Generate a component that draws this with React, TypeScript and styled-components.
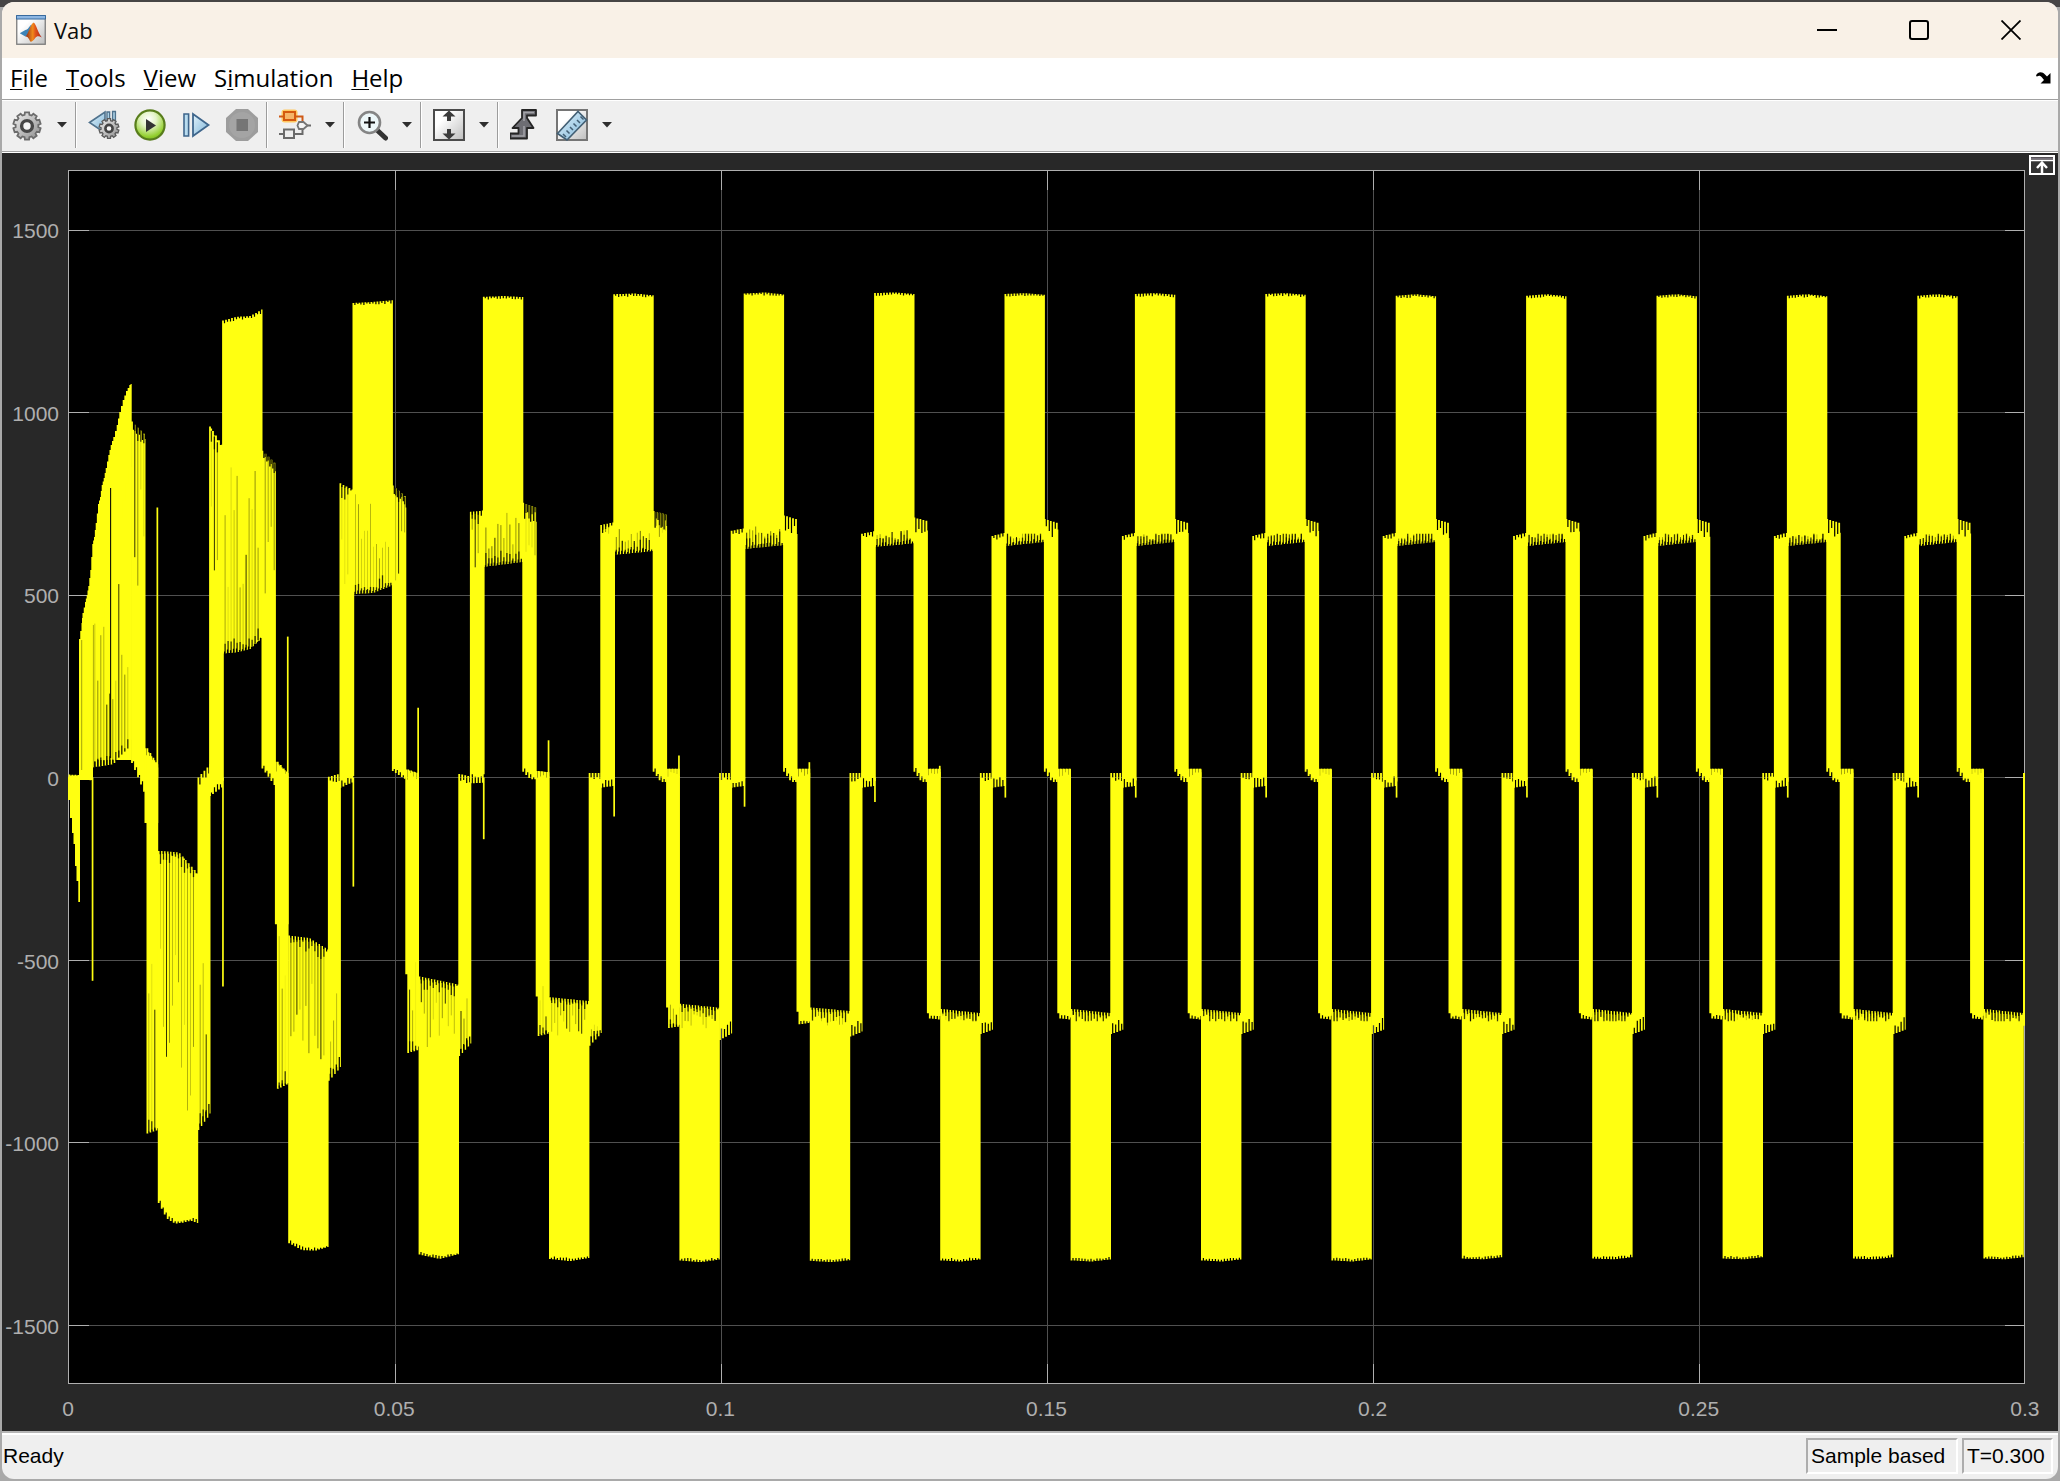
import React from "react";
import styled, { createGlobalStyle } from "styled-components";

const GlobalStyle = createGlobalStyle`
  * { box-sizing: border-box; }
  body {
    margin: 0;
    background: #a9a9a9;
  }
  button {
    border: 0;
    padding: 0;
    margin: 0;
    background: none;
    color: inherit;
    font: inherit;
    cursor: pointer;
  }
  svg { display: block; }
`;

const Desktop = styled.div`
  height: 100vh;
  min-height: 480px;
  padding: 2px;
  background: linear-gradient(#474545 0 7px, #a9a9a9 7px);
`;

const Window = styled.main`
  height: 100%;
  display: flex;
  flex-direction: column;
  overflow: hidden;
  border-radius: 12px;
  background: #efefef;
`;

const TitleBar = styled.header`
  flex: none;
  height: 56px;
  display: flex;
  align-items: center;
  padding: 0 1px 1px 14px;
  gap: 8px;
  background: #f9f1e7;
`;

const Title = styled.h1`
  margin: 0;
  flex: 1;
  font: 400 22px/30px "Open Sans", "Noto Sans", sans-serif;
  color: #0c0c0c;
`;

const WindowControls = styled.div`
  display: flex;
  align-self: stretch;
`;

const ControlButton = styled.button`
  width: 92px;
  display: flex;
  align-items: center;
  justify-content: center;
`;

const MenuBar = styled.nav`
  flex: none;
  height: 42px;
  display: flex;
  align-items: center;
  gap: 18px;
  padding: 0 7px 2px 8px;
  background: #fff;
  border-bottom: 1px solid #a0a0a0;
`;

const MenuButton = styled.button`
  font: 24px/32px "Open Sans", "Noto Sans", sans-serif;
  color: #000;
  u {
    text-decoration-thickness: 1px;
    text-underline-offset: 2px;
  }
`;

const DockButton = styled.button`
  margin-left: auto;
`;

const ToolBar = styled.div`
  flex: none;
  height: 53px;
  display: flex;
  align-items: center;
  padding: 0 2px 3px;
  background: #efefef;
  border-top: 1px solid #fff;
  border-bottom: 1px solid #fff;
  box-shadow: inset 0 -1px #a0a0a0;
`;

const ToolButton = styled.button<{ $dim?: boolean }>`
  width: 46px;
  height: 44px;
  display: flex;
  align-items: center;
  justify-content: center;
  cursor: ${(p) => (p.$dim ? "default" : "pointer")};
`;

const DropButton = styled.button`
  width: 24px;
  height: 44px;
  display: flex;
  align-items: center;
  justify-content: center;
`;

const Separator = styled.span`
  width: 1px;
  height: 46px;
  margin: 0 5px 0 1px;
  background: #9c9c9c;
  box-shadow: 1px 0 #fff;
`;

const Scope = styled.section`
  flex: 1;
  min-height: 0;
  display: grid;
  grid-template-columns: 66px minmax(0, 1fr) 33px;
  grid-template-rows: 17px minmax(0, 1fr) 47px;
  background: #282828;
  color: #afafaf;
  font: 21px/24px "Liberation Sans", Arial, sans-serif;
`;

const YAxis = styled.div`
  grid-area: 2 / 1;
  display: flex;
  flex-direction: column;
  margin: 2px 0 -2px;
  padding-right: 9px;
`;

const YSpacer = styled.span`
  flex: 162;
`;

const YTicks = styled.div`
  flex: 3000;
  display: flex;
  flex-direction: column;
  justify-content: space-between;
  align-items: flex-end;
`;

const YTick = styled.span`
  height: 0;
  display: flex;
  align-items: center;
`;

const Plot = styled.div`
  grid-area: 2 / 2;
  min-height: 0;
  background: #000;
  svg {
    width: 100%;
    height: 100%;
    overflow: visible;
  }
`;

const XAxis = styled.div`
  grid-area: 3 / 2;
  display: flex;
  justify-content: space-between;
  padding-top: 13px;
`;

const XTick = styled.span`
  width: 0;
  display: flex;
  justify-content: center;
`;

const Corner = styled.div`
  grid-area: 1 / 3 / 3 / 4;
  padding: 2px 3px 0 4px;
`;

const StatusBar = styled.footer`
  flex: none;
  height: 48px;
  display: flex;
  align-items: center;
  gap: 4px;
  padding: 0 5px 0 1px;
  border-top: 2px solid #b5b5b5;
  box-shadow: inset 0 2px #fff;
  font: 21px/24px "Liberation Sans", Arial, sans-serif;
  color: #000;
`;

const StatusText = styled.span`
  flex: 1;
`;

const StatusCell = styled.span<{ $width: number }>`
  width: ${(p) => p.$width}px;
  height: 36px;
  padding: 4px 3px;
  white-space: nowrap;
  border: 2px solid;
  border-color: #adadad #fff #fff #adadad;
`;

/* ------------------------------------------------------------------ */
/* Signal trace                                                        */
/* ------------------------------------------------------------------ */

const W = 1957;
const H = 1214;
const PERIOD = 130.4;
const CARRIER = 3;
const Y = (v: number) => 607.5 - 0.365 * v;

type Curve = number[];

interface Cycle {
  aTop: Curve; aBot: Curve;
  bTop: Curve; bBot: Curve;
  cTop: Curve; cBot: Curve; cSolid: number;
  dTop: Curve; dBot: Curve;
  eTop: Curve; eBot: Curve; eStep: number;
  fTop: Curve; fBot: Curve; fSolid: number;
  dip: number; peak: number;
}

const settled: Cycle = {
  aTop: [12, 13], aBot: [-703, -690],
  bTop: [662, 672], bBot: [-28, -22],
  cTop: [1320, 1324, 1318], cBot: [634, 646], cSolid: 668,
  dTop: [708, 696], dBot: [16, -12, -12],
  eTop: [24, 24], eBot: [-660, -664], eStep: -646,
  fTop: [-634, -646], fBot: [-1318, -1320, -1314], fSolid: -668,
  dip: -55, peak: 22,
};

const transient: Cycle[] = [
  {
    ...settled,
    cSolid: 900, dTop: [975, 935], dBot: [40, -55],
    eTop: [80, 30], eBot: [-975, -965], eStep: -125,
    fTop: [-201, -205, -267], fBot: [-1166, -1208, -1222, -1220, -1214, -1222], fSolid: -960,
    dip: -557, peak: 740,
  },
  {
    aTop: [0, 40], aBot: [-966, -917],
    bTop: [962, 900], bBot: [-51, -22],
    cTop: [1252, 1262, 1264, 1284], cBot: [340, 343, 352, 386], cSolid: 900,
    dTop: [895, 856], dBot: [25, -30],
    eTop: [43, 8], eBot: [-853, -838], eStep: -402,
    fTop: [-433, -440, -474], fBot: [-1276, -1295, -1296, -1285], fSolid: -840,
    dip: -573, peak: 386,
  },
  {
    aTop: [2, 12], aBot: [-831, -790],
    bTop: [806, 785], bBot: [-28, -10],
    cTop: [1300, 1303, 1308], cBot: [502, 506, 528], cSolid: 780,
    dTop: [800, 765], dBot: [18, -8],
    eTop: [22, 10], eBot: [-755, -745], eStep: -539,
    fTop: [-545, -568], fBot: [-1307, -1319, -1305], fSolid: -752,
    dip: -299, peak: 191,
  },
  {
    ...settled,
    aTop: [10, 2], aBot: [-763, -726],
    bTop: [728, 732], bBot: [-16, -14],
    cTop: [1317, 1319, 1316], cBot: [577, 591], cSolid: 735,
    dTop: [753, 737], dBot: [16, -5, -5],
    eTop: [18, 14], eBot: [-708, -700], eStep: -600,
    fTop: [-602, -613], fBot: [-1319, -1325, -1316], fSolid: -708,
    dip: -169, peak: 102,
  },
  {
    ...settled,
    aBot: [-735, -697], bTop: [692, 700],
    cTop: [1324, 1326, 1321], cBot: [610, 621], cSolid: 704,
    dTop: [730, 719], eBot: [-686, -682], eStep: -630,
    fTop: [-620, -631], fBot: [-1323, -1328, -1320], fSolid: -692,
    dip: -107, peak: 60,
  },
  {
    ...settled,
    aBot: [-719, -700], bTop: [676, 684],
    cTop: [1326, 1329, 1323], cBot: [626, 637], cSolid: 688,
    dTop: [718, 706], eBot: [-676, -672], eStep: -642,
    fTop: [-630, -640], fBot: [-1324, -1328, -1322], fSolid: -680,
    dip: -80, peak: 42,
  },
  {
    ...settled,
    aBot: [-710, -695], bTop: [668, 676],
    cTop: [1327, 1329, 1324], cBot: [632, 642], cSolid: 678,
    dTop: [712, 702], fBot: [-1323, -1326, -1320],
    dip: -67, peak: 32,
  },
];

const cycleAt = (k: number): Cycle => {
  if (k < transient.length) return transient[k];
  if (k < 10) return { ...settled, cTop: [1325, 1327, 1322], fBot: [-1323, -1326, -1320] };
  return settled;
};

const noise = (a: number, b: number) => {
  const s = Math.sin(a * 127.1 + b * 311.7) * 43758.5453;
  return s - Math.floor(s);
};

const sample = (c: Curve, t: number) => {
  const p = Math.min(0.9999, Math.max(0, t)) * (c.length - 1);
  const i = Math.floor(p);
  return c[i] + (c[i + 1] - c[i]) * (p - i);
};

/* Filled band between two envelopes; every carrier step leaves a notch. */
const band = (
  x0: number, x1: number, top: Curve, bot: Curve, notchTop: number, notchBot: number, seed: number,
) => {
  const up: string[] = [];
  const down: string[] = [];
  let i = 0;
  for (let x = x0; x < x1 - 0.2; x += CARRIER, i++) {
    const t = (x - x0) / (x1 - x0);
    const xm = Math.min(x + 1.8, x1);
    const xe = Math.min(x + CARRIER, x1);
    const yt = Y(sample(top, t));
    const yb = Y(sample(bot, t));
    const nt = notchTop * (0.4 + 0.6 * noise(i, seed));
    const nb = notchBot * (0.4 + 0.6 * noise(i, seed + 9));
    up.push(`${x.toFixed(1)},${yt.toFixed(1)} ${xm.toFixed(1)},${yt.toFixed(1)} ${xm.toFixed(1)},${(yt + nt).toFixed(1)} ${xe.toFixed(1)},${(yt + nt).toFixed(1)}`);
    down.unshift(`${xe.toFixed(1)},${(yb - nb).toFixed(1)} ${xm.toFixed(1)},${(yb - nb).toFixed(1)} ${xm.toFixed(1)},${yb.toFixed(1)} ${x.toFixed(1)},${yb.toFixed(1)}`);
  }
  return `M${up.join(" ")} ${down.join(" ")}Z`;
};

const block = (x: number, w: number, v0: number, v1: number) =>
  `M${x.toFixed(1)},${Y(v0).toFixed(1)}h${w}V${Y(v1).toFixed(1)}h${-w}Z`;

interface Streak { x: number; y0: number; y1: number; o: number; w: number }

/* Gaps between carrier pulses: a dark stub at the edge and a fainter tail. */
const streaks = (x0: number, x1: number, edge: Curve, limit: number, seed: number, base: number): Streak[] => {
  const out: Streak[] = [];
  let i = 0;
  for (let x = x0 + 2.3; x < x1 - 1; x += CARRIER, i++) {
    const e = sample(edge, (x - x0) / (x1 - x0));
    const y0 = Y(e);
    const full = Y(limit) - y0;
    const reach = full * (0.3 + 0.7 * noise(i, seed + 3));
    const stub = Math.sign(full) * Math.min(Math.abs(full), 3 + 11 * noise(i, seed + 7));
    const dark = noise(i, seed + 5);
    out.push({ x, y0, y1: y0 + reach, o: dark > 0.88 ? 0.8 : base + dark * 0.4, w: 1 });
    out.push({ x, y0, y1: y0 + stub, o: 0.75, w: 1.3 });
  }
  return out;
};

const firstRise = [
  [11, 469], [13.5, 453], [14.5, 443], [17, 432], [18.7, 425], [20.3, 416], [22.3, 400], [24.3, 374],
  [26, 367], [27.7, 353], [30, 334], [32, 327], [33.7, 315], [35.7, 308], [37.7, 298], [40.3, 285],
  [42.7, 275], [45.3, 267], [48.7, 255], [51.3, 242], [54.7, 230], [58, 221], [61.3, 215], [63.7, 213],
];
const firstFall = [[0, 630], [2, 648], [4, 663], [5.5, 674], [7, 696], [8.5, 711], [10.3, 732], [12, 732]];

const refine = (pts: number[][]) =>
  pts.flatMap((p, i) => (i ? [[(p[0] + pts[i - 1][0]) / 2, (p[1] + pts[i - 1][1]) / 2], p] : [p]));

const buildTrace = () => {
  const paths: string[] = [];
  let gaps: Streak[] = [];
  const steps = (pts: number[][]) => pts.map((p, i) => (i ? `H${p[0]}V${p[1]}` : `M${p[0]},${p[1]}`)).join("");

  paths.push(`${steps(firstFall)}V607H0Z`);
  paths.push(band(0.5, 24.5, [8, 6], [-5, -8], 2, 2, 300));
  paths.push(`${steps(refine(firstRise))}V590H25V610H11Z`);
  paths.push(band(24.5, 63.7, [300, 900], [28, 36, 90], 0, 12, 1));
  gaps = gaps.concat(streaks(24.5, 63.7, [28, 36, 90], 560, 2, 0.12));
  gaps.push({ x: 42.6, y0: 588, y1: 318, o: 0.95, w: 1.1 });
  gaps.push({ x: 13.7, y0: 600, y1: 470, o: 0.45, w: 0.8 }, { x: 25.4, y0: 597, y1: 455, o: 0.4, w: 0.8 });

  for (let k = 0; k < 15; k++) {
    const c = cycleAt(k);
    const x = 0.5 + k * PERIOD;
    const early = k < 3;
    if (k > 0) {
      paths.push(band(x - 1.4, x + 11.6, c.aTop, c.aBot, early ? 8 : 9, 14, k));
      paths.push(band(x + 10.2, x + 24.9, c.bTop, c.bBot, 5, early ? 9 : 10, k + 20));
      paths.push(band(x + 23.2, x + 63.6, c.cTop, c.cBot, 3, 4, k + 40));
      gaps = gaps.concat(streaks(x + 23.9, x + 63, c.cBot, c.cSolid, k + 60, early ? 0.12 : 0.25));
    }
    paths.push(block(x + 23.2, 1.7, 0, c.dip));
    paths.push(band(x + 62.6, x + 77, c.dTop, c.dBot, early ? 12 : 17, 4, k + 80));
    paths.push(band(x + 76, x + 89.7, c.eTop, [c.eStep, c.eStep], early ? 12 : 8, 0, k + 100));
    paths.push(band(x + 78, x + 89.7, c.eTop, c.eBot, 8, 4, k + 120));
    paths.push(block(x + 88, 1.7, c.peak, 0));
    paths.push(band(x + 89.3, x + 129.7, c.fTop, c.fBot, 4, 3, k + 140));
    gaps = gaps.concat(streaks(x + 89.7, x + 129, c.fTop, c.fSolid, k + 160, 0.12));
    if (k < 5) {
      const spread = [0.5, 0.5, 0.35, 0.22, 0.1][k];
      gaps = gaps.concat(
        streaks(x + 64, x + 77, c.dTop, c.dTop[0] * (1 - spread), k + 180, 0.1),
        streaks(x + 78, x + 89, c.eBot, c.eBot[0] * (1 - spread), k + 200, 0.05),
      );
      if (k > 0) {
        gaps = gaps.concat(
          streaks(x - 1, x + 11, c.aBot, c.aBot[0] * (1 - spread), k + 220, 0.1),
          streaks(x + 10.2, x + 22, c.bTop, c.bTop[0] * (1 - spread), k + 240, 0.1),
        );
      }
    }
  }
  paths.push(block(W - 2, 2, 12, -680));
  return { d: paths, gaps };
};

const trace = buildTrace();
const xTicks = ["0", "0.05", "0.1", "0.15", "0.2", "0.25", "0.3"];
const yTicks = ["1500", "1000", "500", "0", "-500", "-1000", "-1500"];

const ScopePlot = () => (
  <svg viewBox={`0 0 ${W} ${H}`} preserveAspectRatio="none" role="img" aria-label="Vab signal">
    <g shapeRendering="crispEdges" strokeWidth="1">
      {yTicks.map((t) => {
        const y = Math.floor(Y(Number(t))) + 0.5;
        return (
          <g key={t}>
            <path d={`M0,${y}H${W}`} stroke="#505050" />
            <path d={`M0,${y}H21M${W - 20},${y}H${W}`} stroke="#afafaf" />
          </g>
        );
      })}
      {xTicks.slice(1, -1).map((t) => {
        const x = Math.round(Number(t) * 6521) + 1.5;
        return (
          <g key={t}>
            <path d={`M${x},0V${H}`} stroke="#505050" />
            <path d={`M${x},0V20M${x},${H - 20}V${H}`} stroke="#afafaf" />
          </g>
        );
      })}
      <rect x="0.5" y="0.5" width={W - 1} height={H - 1} fill="none" stroke="#afafaf" />
    </g>
    {trace.d.map((d, i) => (
      <path key={i} d={d} fill="#ffff11" />
    ))}
    {trace.gaps.map((g, i) => (
      <path key={i} d={`M${g.x.toFixed(1)},${g.y0.toFixed(1)}V${g.y1.toFixed(1)}`} stroke="#000" strokeOpacity={g.o.toFixed(2)} strokeWidth={g.w} />
    ))}
  </svg>
);

/* ------------------------------------------------------------------ */
/* Icons                                                               */
/* ------------------------------------------------------------------ */

const Icon = ({ children, size = 32 }: { children: React.ReactNode; size?: number }) => (
  <svg width={size} height={size} viewBox="0 0 32 32" aria-hidden="true">
    {children}
  </svg>
);

const GradientDefs = styled.svg`
  position: absolute;
`;

const Gradients = () => (
  <GradientDefs width="0" height="0" aria-hidden="true">
    <defs>
      <linearGradient id="steel" x1="0" y1="0" x2="1" y2="1">
        <stop offset="0" stopColor="#f2f2f2" />
        <stop offset="1" stopColor="#8c8c8c" />
      </linearGradient>
      <linearGradient id="paper" x1="0" y1="0" x2="1" y2="1">
        <stop offset="0.3" stopColor="#ffffff" />
        <stop offset="1" stopColor="#bdbdbd" />
      </linearGradient>
      <linearGradient id="sky" x1="0" y1="0" x2="1" y2="1">
        <stop offset="0" stopColor="#e2f3fb" />
        <stop offset="1" stopColor="#7db4d8" />
      </linearGradient>
      <radialGradient id="green" cx="0.45" cy="0.3" r="0.75">
        <stop offset="0" stopColor="#ffffff" />
        <stop offset="0.35" stopColor="#e4f4c8" />
        <stop offset="0.8" stopColor="#93cf2e" />
        <stop offset="1" stopColor="#6fae1b" />
      </radialGradient>
      <linearGradient id="flame" x1="0" y1="0" x2="1" y2="0">
        <stop offset="0" stopColor="#8a2a1a" />
        <stop offset="0.45" stopColor="#f08a1c" />
        <stop offset="0.6" stopColor="#e2571c" />
        <stop offset="1" stopColor="#b02418" />
      </linearGradient>
    </defs>
  </GradientDefs>
);

const gearPath = (cx: number, cy: number, r: number, depth: number) => {
  const pts: string[] = [];
  const teeth = 10;
  for (let i = 0; i < teeth; i++) {
    [[-0.34, r - depth], [-0.24, r], [0.24, r], [0.34, r - depth]].forEach(([o, q]) => {
      const a = ((i + o) / teeth) * Math.PI * 2;
      pts.push(`${(cx + q * Math.sin(a)).toFixed(2)},${(cy - q * Math.cos(a)).toFixed(2)}`);
    });
  }
  return `M${pts.join("L")}Z`;
};

const GearIcon = () => (
  <Icon>
    <path d={gearPath(16, 17, 13.8, 2.4)} fill="url(#steel)" stroke="#6c6c6c" strokeWidth="1.8" />
    <circle cx="16" cy="17" r="5.4" fill="#f6f6f6" stroke="#484848" strokeWidth="3.4" />
  </Icon>
);

const StepBackIcon = () => (
  <Icon>
    <path d="M1.5 13.5 17 3v21Z" fill="url(#sky)" stroke="#50738e" strokeWidth="1.6" />
    <path d="M19 3h2.6v14H19ZM24.6 2.5h2.8V16h-2.8Z" fill="#b6dcf0" stroke="#50738e" strokeWidth="1.4" />
    <path d={gearPath(21, 19.5, 10, 2)} fill="url(#steel)" stroke="#5c5c5c" strokeWidth="1.3" />
    <circle cx="21" cy="19.5" r="3.6" fill="#f6f6f6" stroke="#444" strokeWidth="2.6" />
  </Icon>
);

const RunIcon = () => (
  <Icon>
    <circle cx="16" cy="16" r="14.6" fill="url(#green)" stroke="#587d1c" strokeWidth="2.2" />
    <path d="M12 10v13l10-6.5Z" fill="#333" />
  </Icon>
);

const StepForwardIcon = () => (
  <Icon>
    <path d="M4 5h4.6v22H4Z" fill="#b9dcef" stroke="#3f668c" strokeWidth="1.6" />
    <path d="M13 5v22l15.5-11Z" fill="url(#sky)" stroke="#3f668c" strokeWidth="1.8" />
  </Icon>
);

const StopIcon = () => (
  <Icon>
    <path d="M10 0h12l10 9v14l-10 9H10L0 23V9Z" fill="#9d9d9d" />
    <circle cx="16" cy="16" r="13" fill="#a4a4a4" />
    <rect x="10.5" y="10" width="11.5" height="12" fill="#757575" />
  </Icon>
);

const BlocksIcon = () => (
  <Icon>
    <rect x="2.5" y="0.5" width="16" height="13" rx="3" fill="#ffc861" />
    <path d="M0 7.5h4M17 7.5h6.500V12" fill="none" stroke="#cf5a16" strokeWidth="2" />
    <rect x="5" y="3" width="11" height="8" fill="#f5b568" stroke="#d4590f" strokeWidth="2" />
    <path d="M0 25h5M15 25h8.500v-4M28 16.500h4" fill="none" stroke="#6a6a6a" strokeWidth="2" />
    <rect x="5" y="20.5" width="10" height="8.5" fill="#eee" stroke="#6a6a6a" strokeWidth="2" />
    <path d="M20 13h4.500l4 3.500-4 3.500H20l-1.500-3.500Z" fill="#f4f4f4" stroke="#757575" strokeWidth="1.8" />
  </Icon>
);

const ZoomIcon = () => (
  <Icon>
    <path d="m21.500 21.500 8 7.500" stroke="#333" strokeWidth="5" strokeLinecap="round" />
    <circle cx="13.5" cy="13.5" r="10.5" fill="#edf7f9" stroke="#858585" strokeWidth="2.6" />
    <path d="M13.500 8v11M8 13.500h11" stroke="#111" strokeWidth="2.2" />
  </Icon>
);

const FitIcon = () => (
  <Icon>
    <rect x="1" y="1" width="30" height="30" fill="url(#paper)" stroke="#4b4b4b" strokeWidth="2" />
    <path d="M16 1.500 9.500 7.500H14V12h4V7.500h4.500ZM16 30.500 9.500 24.500H14V20h4v4.500h4.500Z" fill="#3b3b3b" />
  </Icon>
);

const TriggerIcon = () => (
  <Icon>
    <path d="M0 24.500h8.500V19H2.500L12 9V1h14v5.500h-9V9l6.500 10H17v10.500H0Z" fill="#6d6d73" stroke="#252525" strokeWidth="1.8" strokeLinejoin="round" />
    <path d="M2 27h12V17M14 12V3.500h10" fill="none" stroke="#a3a3a8" strokeWidth="1.5" />
  </Icon>
);

const RulerIcon = () => (
  <Icon>
    <rect x="1" y="1" width="30" height="30" fill="url(#paper)" stroke="#757575" strokeWidth="2" />
    <path d="m1.500 24.500 20.500-22L30.500 11 11 31Z" fill="url(#sky)" stroke="#425f74" strokeWidth="1.6" />
    <path d="m10 28-3-3m6.500-.5-3-3m6.500-.5-3-3m6.500-.5-3-3m6.500-.5-3-3m6.500-.5-3-3" stroke="#425f74" strokeWidth="1.5" />
  </Icon>
);

const Caret = () => (
  <svg width="12" height="6" viewBox="0 0 12 6" aria-hidden="true">
    <path d="M1 0h10L6 5.500Z" fill="#2e2e2e" />
  </svg>
);

const AppIcon = () => (
  <Icon size={30}>
    <rect x="0.8" y="0.8" width="30.4" height="30.4" fill="url(#paper)" stroke="#7d7d7d" strokeWidth="1.4" />
    <path d="M0.500 0.500h31v3.800H0.500Z" fill="#8db6e2" stroke="#31659b" strokeWidth="1" />
    <path d="m4 19.500 6-3.500c3-.5 4-4 6.500-6L13 21l-3 2Z" fill="#3d84b8" />
    <path d="M10 23c3-2 5.500-14 9-15 2.500 2 4.500 11 8.500 16-3-1.500-5-2-7 .5-1.500 2-3 4-5 4-1.500-2-2.500-6-5.500-5.500Z" fill="url(#flame)" />
  </Icon>
);

const Split = ({ label, icon }: { label: string; icon: React.ReactNode }) => (
  <>
    <ToolButton aria-label={label}>{icon}</ToolButton>
    <DropButton aria-label={`${label} options`}>
      <Caret />
    </DropButton>
  </>
);

const menus = [
  ["", "F", "ile"],
  ["", "T", "ools"],
  ["", "V", "iew"],
  ["S", "i", "mulation"],
  ["", "H", "elp"],
];

export default function App() {
  return (
    <Desktop>
      <GlobalStyle />
      <Gradients />
      <Window>
        <TitleBar>
          <AppIcon />
          <Title>Vab</Title>
          <WindowControls>
            <ControlButton aria-label="Minimize">
              <svg width="20" height="20"><path d="M0 10h20" stroke="#000" strokeWidth="2" /></svg>
            </ControlButton>
            <ControlButton aria-label="Maximize">
              <svg width="20" height="20"><rect x="1" y="1" width="18" height="18" rx="2" fill="none" stroke="#000" strokeWidth="2" /></svg>
            </ControlButton>
            <ControlButton aria-label="Close">
              <svg width="20" height="20"><path d="m0.500 0.500 19 19m0-19-19 19" stroke="#000" strokeWidth="1.8" /></svg>
            </ControlButton>
          </WindowControls>
        </TitleBar>
        <MenuBar>
          {menus.map(([pre, key, post]) => (
            <MenuButton key={post}>
              {pre}
              <u>{key}</u>
              {post}
            </MenuButton>
          ))}
          <DockButton aria-label="Dock window">
            <svg width="15" height="12" viewBox="0 0 15 12">
              <path d="M0 4C1 0 6-1 9 2.500l2 2 3.500-3.500v10.500H4.500L8 8 6 5.500C4.500 3.500 3 3 1 4.500Z" fill="#000" />
            </svg>
          </DockButton>
        </MenuBar>
        <ToolBar role="toolbar" aria-label="Scope tools">
          <Split label="Configuration properties" icon={<GearIcon />} />
          <Separator />
          <ToolButton aria-label="Step back"><StepBackIcon /></ToolButton>
          <ToolButton aria-label="Run"><RunIcon /></ToolButton>
          <ToolButton aria-label="Step forward"><StepForwardIcon /></ToolButton>
          <ToolButton aria-label="Stop" $dim><StopIcon /></ToolButton>
          <Separator />
          <Split label="Highlight block" icon={<BlocksIcon />} />
          <Separator />
          <Split label="Zoom" icon={<ZoomIcon />} />
          <Separator />
          <Split label="Scale axes" icon={<FitIcon />} />
          <Separator />
          <ToolButton aria-label="Triggers"><TriggerIcon /></ToolButton>
          <Split label="Measurements" icon={<RulerIcon />} />
        </ToolBar>
        <Scope>
          <YAxis>
            <YSpacer />
            <YTicks>
              {yTicks.map((t) => (
                <YTick key={t}>{t}</YTick>
              ))}
            </YTicks>
            <YSpacer />
          </YAxis>
          <Plot>
            <ScopePlot />
          </Plot>
          <XAxis>
            {xTicks.map((t) => (
              <XTick key={t}>{t}</XTick>
            ))}
          </XAxis>
          <Corner>
            <button aria-label="Maximize axes">
              <svg width="26" height="20" viewBox="0 0 26 20">
                <rect x="1" y="1" width="24" height="18" fill="#333" stroke="#fff" strokeWidth="2" />
                <path d="M2 3.500h22" stroke="#77717a" strokeWidth="2" />
                <path d="M2 5.500h22" stroke="#fff" strokeWidth="1.5" />
                <path d="M13 19V8M8 13l5-5.500 5 5.500" fill="none" stroke="#fff" strokeWidth="2.5" />
              </svg>
            </button>
          </Corner>
        </Scope>
        <StatusBar>
          <StatusText>Ready</StatusText>
          <StatusCell $width={152}>Sample based</StatusCell>
          <StatusCell $width={91}>T=0.300</StatusCell>
        </StatusBar>
      </Window>
    </Desktop>
  );
}
